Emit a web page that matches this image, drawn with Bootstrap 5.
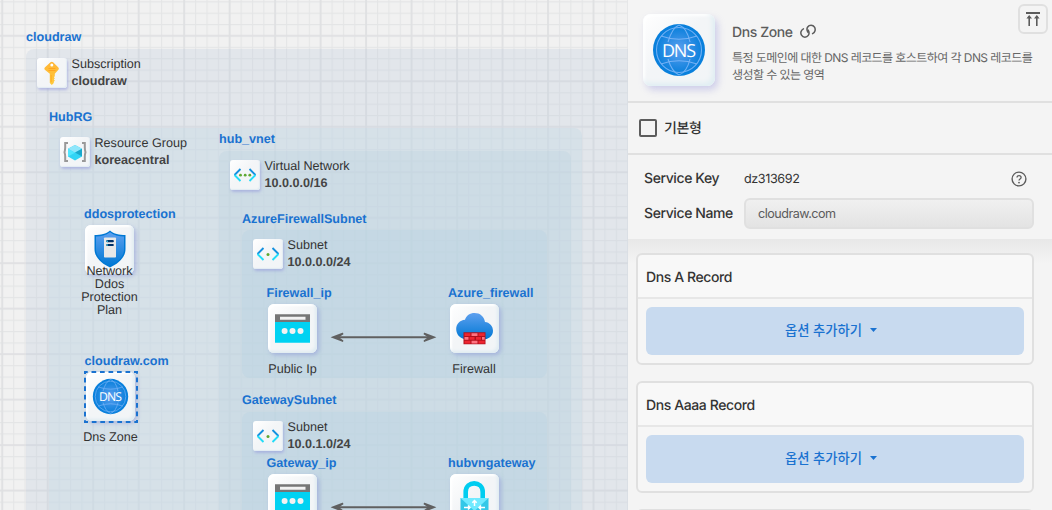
<!DOCTYPE html>
<html lang="ko">
<head>
<meta charset="utf-8">
<meta name="viewport" content="width=device-width, initial-scale=1">
<title>cloudraw</title>
<link href="https://cdn.jsdelivr.net/npm/bootstrap@5.3.0/dist/css/bootstrap.min.css" rel="stylesheet">
<style>
body{font-family:Inter,"Noto Sans CJK KR",sans-serif;font-size:14px;letter-spacing:-.4px;color:#333;background:#f4f4f4;text-rendering:geometricPrecision}
.workspace{height:510px}
.board{background-color:#f1f1f1;font-family:"Liberation Sans",Arial,sans-serif;font-size:12.6px;line-height:17px;letter-spacing:0}
.lines{position:absolute;inset:0;width:100%;height:100%}
.zone,.item{position:absolute}
.zone{border-radius:8px}
.z-sub{left:26px;top:49px;width:700px;height:600px;background:rgba(191,206,221,.3)}
.z-rg{left:49px;top:128px;width:533px;height:500px;background:rgba(199,219,230,.47)}
.z-vnet{left:219px;top:151px;width:352px;height:480px;background:rgba(184,207,221,.3)}
.z-fw,.z-gw{background:rgba(178,208,224,.3)}
.z-fw{left:242px;top:230px;width:305px;height:148px}
.z-gw{left:242px;top:412px;width:305px;height:180px}
.cap{position:absolute;left:0;top:-20px;color:#1a72d0;font-weight:700;white-space:nowrap}
.z-rg>.cap{top:-19px}
.z-fw>.cap{top:-19px}
.z-head{padding:7px 0 0 11px}
.z-head svg,.tile,.tile-lg{background:linear-gradient(135deg,#fff,#f3f5f7 45%,#f2f5f7)}
.z-head svg{width:30px;height:30px;margin:2px 4.5px 0 0;border-radius:3px;box-shadow:1px 2px 3px rgba(150,155,220,.6),inset -1px -1px 1px #e2ecf2;flex:none}
.z-head div{white-space:nowrap}
.z-head b{color:#444}
.tile{width:49px;height:49px;border-radius:6px;display:block;box-shadow:2px 2px 4px rgba(140,150,215,.55),inset -2px -2px 3px #e0ecf2,inset 2px 2px 2px #fff}
.item .cap{left:-1.5px;top:-19px}
.item .sub{position:absolute;left:50%;top:57px;transform:translateX(-50%);white-space:nowrap}
.i-ddos{left:85px;top:225px}
.i-ddos .cap{left:-1px}
.i-dns{left:86px;top:372px}
.i-ip1{left:268px;top:304px}.i-fw{left:449.5px;top:304px}
.i-ip2{left:268px;top:474px}.i-gw{left:449.5px;top:474px}
.i-ddos .sub{top:40px;line-height:13px;text-align:center}
.picked-frame{position:absolute;left:-2px;top:-1px;width:54px;height:52px;z-index:1}
.panel{width:424px;background:#f4f4f4}
.line-b{border-bottom:2px solid #e0e0e0}
.head{height:103px;padding:14px 0 0 15px}
.tile-lg{width:72px;height:72px;border-radius:8px;flex:none;box-shadow:3px 4px 7px rgba(150,150,220,.4),inset -3px -3px 5px #e0eef3,inset 2px 2px 3px #fff}
.head-text{margin-left:17px;padding-top:8px;width:306px;color:#666}
.ttl{font-weight:500;line-height:22px;color:#5c5c5c}
.ttl svg{margin-left:7px}
.desc{font-size:12px;letter-spacing:-.57px;line-height:17px;margin-top:5px}
.up{position:absolute;right:4px;top:4px;width:30px;height:30px;border:2px solid #e0e0e0;border-radius:6px;display:block}
.basic{height:52px;padding-left:11px}
.basic-t{margin-left:7px}
.box{width:18px;height:18px;border:2px solid #5c5c5c;border-radius:2px;background:transparent}
.fields{height:84px;padding:8px 18px 0 16px;font-weight:500}
.fields .lbl{width:100px;line-height:22px}
.key-row{height:31px}
.key-v{font-size:12.6px;font-weight:400;padding-top:3px}
.help{margin-right:7px}
.name-row{margin-top:4px}
.name{height:31px;border:2px solid #e0e0e0;border-radius:6px;background:linear-gradient(#f0f0f0,#e3e3e3);color:#5c5c5c;font-size:12.6px;letter-spacing:-.5px;font-weight:400;padding:0 12px;line-height:26px;box-shadow:none}
.list{padding:14px 18px 0 8px;height:271px;gap:16px;background:linear-gradient(#e8e8e8,#f4f4f4 24px)}
.rec{border:2px solid #e0e0e0;border-radius:6px;height:112px;flex:none;background:rgba(246,246,246,.6)}
.rec-h{height:44px;padding:2px 0 0 8px;font-weight:500;background:rgba(250,250,250,.7);border-bottom:2px solid #e7e7e7;border-radius:5px 5px 0 0}
.add{height:48px;margin:8px;border:0;border-radius:6px;background:#c8daef;color:#1a72d0;font-size:13.3px;font-weight:500;padding:0 8px 0 0}
.add svg{vertical-align:3px}
</style>
</head>
<body class="overflow-hidden">
<svg width="0" height="0" class="position-absolute">
<defs>
<linearGradient id="bl" x1="0" y1="0" x2="0" y2="1"><stop stop-color="#5ea0ef"/><stop offset="1" stop-color="#0078d4"/></linearGradient>
<radialGradient id="gl"><stop stop-color="#5ea0ef"/><stop offset=".9" stop-color="#0a80dc"/></radialGradient>
<linearGradient id="ky" x1="0" y1="0" x2="0" y2="1"><stop stop-color="#ffb535"/><stop offset="1" stop-color="#ffc93c"/></linearGradient>
<symbol id="key" viewBox="0 0 30 30"><path d="M13.500 4.200q1.300-1.100 2.600 0l5.300 5.200q1 1.200 0 2.400l-3.600 3.900v2.500l-1 1 1 1-1 1.200 1 1.200-1 1.100v1.200l-2 2-2-2V15.700l-5-3.900q-1-1.200 0-2.400z" fill="url(#ky)"/><circle cx="14.800" cy="7" r="1.500" fill="#fff"/><path d="M11.500 10.500h7M11.500 12.500h7" stroke="#ffa21f" stroke-width=".9"/><path d="M14.200 17v7" stroke="#ffa21f" stroke-width=".7"/></symbol>
<symbol id="rg" viewBox="0 0 30 30"><path d="M8 6H5.200v4.500q0 2-.7 4.800.7 2.200.7 4.500V24H8M22 6h2.800v4.500q0 2 .7 4.800-.7 2.200-.7 4.500V24H22" fill="none" stroke="#999" stroke-width="2"/><path d="M15 8l7 3.800v7.800L15 23.500l-7-3.900v-7.800z" fill="#32d4f5"/><path d="M15 8l7 3.800-7 4-7-4z" fill="#8fe6fb"/><path d="M15 15.500l7-3.700v7.800z" fill="#1aa8cc"/><path d="M8 11.800l7 4-7 3.800z" fill="#50e6ff"/></symbol>
<symbol id="net" viewBox="0 0 30 30"><path d="M10.500 9L4.500 15M19.500 9l6 6" stroke="#1490df" stroke-width="1.900"/><path d="M4.500 15l6 6M25.500 15l-6 6" stroke="#22dcf8" stroke-width="1.900"/></symbol>
<symbol id="vnet" viewBox="0 0 30 30"><use href="#net"/><g fill="#5ea832"><circle cx="10.500" cy="15.200" r="1.400"/><circle cx="15.200" cy="15.200" r="1.400"/><circle cx="19.800" cy="15.200" r="1.400"/></g></symbol>
<symbol id="snet" viewBox="0 0 30 30"><use href="#net"/><circle cx="15" cy="15.500" r="1.500" fill="#5ea832"/></symbol>
<symbol id="dns" viewBox="0 0 72 72"><circle cx="36" cy="36" r="26" fill="url(#gl)"/><g fill="none" stroke="#83b9f9" stroke-width="1.100" opacity=".85"><circle cx="36" cy="36" r="22.500"/><path d="M18 22q18 6.500 36 0M18 50q18-6.500 36 0M25 28q4-14 11-17 8 3 11 17M25 45q4 13 11 16 8-3 11-16"/></g><text x="36" y="42.500" text-anchor="middle" font-family="Open Sans,Noto Sans,sans-serif" font-size="18" fill="#fff" textLength="34" letter-spacing="0">DNS</text></symbol>
<symbol id="ip" viewBox="0 0 49 49"><path d="M7 10.300h35v8H7z" fill="#767676"/><path d="M12 12.800h25.500v3H12z" fill="#f2f2f2"/><path d="M7 18h35v20.700H7z" fill="#00d2f2"/><g fill="#f2f2f2"><circle cx="16.600" cy="27" r="3"/><circle cx="24.500" cy="27" r="3"/><circle cx="32.500" cy="27" r="3"/></g></symbol>
<symbol id="fire" viewBox="0 0 49 49"><path d="M15 35.200h20c4.600-.6 8-4 8-8.500 0-5-3.600-8.200-8-8.700-.8-5.600-5-9-10.500-9-4.600 0-8.200 2.600-9.500 6.800-5.200.4-8.800 4.300-8.800 9.300 0 5.600 3.900 9.500 8.800 10.100z" fill="url(#bl)"/><path d="M13.500 28.300h22v12h-22z" fill="#b0101c"/><g fill="#ee2530"><path d="M14.500 29.300h6v2.800h-6zM28.500 29.300h6.200v2.800h-6.200zM19.500 33h5v2.800h-5zM14.500 36.800h6v2.700h-6zM28.500 36.800h6.200v2.700h-6.200zM26 33h5v2.800h-5z"/></g><g fill="#ff7381"><path d="M21.500 29.300h6v2.800h-6zM14.500 33h4v2.800h-4zM32 33h2.700v2.800H32zM21.500 36.800h6v2.700h-6z"/></g></symbol>
<symbol id="shield" viewBox="0 0 49 49"><path d="M25 5.500c4 3.700 9 4.300 15.500 4.500v14c0 9-8 15-15.500 18.500C17.500 39 9.500 33 9.500 24V10C16 9.800 21 9.200 25 5.500z" fill="#0078d4"/><path d="M25 7.200c4 3.200 8.500 4.100 14 4.300V24c0 8-7 13.500-14 17-7-3.500-14-9-14-17V11.500c5.500-.2 10-1.100 14-4.300z" fill="url(#bl)"/><rect x="19" y="12.500" width="12" height="20" rx=".8" fill="#e8e8e8"/><path d="M22.300 16.200h5.500M22.300 20h5.500" stroke="#003067" stroke-width="2.200" stroke-linecap="round"/><circle cx="22.300" cy="16.200" r=".8" fill="#32d4f5"/><circle cx="22.300" cy="20" r=".8" fill="#32d4f5"/></symbol>
<symbol id="lock" viewBox="0 0 49 49"><path d="M15.700 25v-7c0-11.500 17-11.500 17 0v7" fill="none" stroke="#00cdf0" stroke-width="4.600"/><path d="M10.500 24h28v18h-28z" fill="#32c8e8"/><path d="M10.500 24h28l-14 13z" fill="#70eaff"/><path d="M24.500 32v-5m-2.200 1.700l2.200-2.200 2.200 2.200M14 33.500h6m-2-2l2 2-2 2M35 33.500h-6m2-2l-2 2 2 2" stroke="#fff" stroke-width="1.500" fill="none"/></symbol>
<pattern id="minor" x="1.800" y="1.300" width="11.370" height="11.370" patternUnits="userSpaceOnUse"><path d="M.6 0v11.370M0 .6h11.370" stroke="#e4e5e6" stroke-width="1.100"/></pattern>
<pattern id="major" x="46.700" y="34.700" width="45.480" height="45.480" patternUnits="userSpaceOnUse"><path d="M1 0v45.480M0 1h45.480" stroke="#dfe0e2" stroke-width="1.600"/></pattern>
<symbol id="arrow" viewBox="0 0 106 10"><path d="M5 5h96" stroke="#606060" stroke-width="2"/><path d="M0 5L12.500.3 12.900 1.900 8.500 5l4.400 3.100-.4 1.600zM106 5L93.500.3l-.4 1.600L97.500 5l-4.400 3.100.4 1.600z" fill="#606060"/></symbol>
</defs></svg>

<div class="workspace d-flex">
<main class="board flex-grow-1 position-relative overflow-hidden">
<svg class="lines"><rect width="100%" height="100%" fill="url(#minor)"/><rect width="100%" height="100%" fill="url(#major)"/></svg>
<section class="zone z-sub"><div class="cap">cloudraw</div><div class="z-head d-flex"><svg><use href="#key"/></svg><div>Subscription<br><b>cloudraw</b></div></div></section>
<section class="zone z-rg"><div class="cap">HubRG</div><div class="z-head d-flex"><svg><use href="#rg"/></svg><div>Resource Group<br><b>koreacentral</b></div></div></section>
<section class="zone z-vnet"><div class="cap">hub_vnet</div><div class="z-head d-flex"><svg><use href="#vnet"/></svg><div>Virtual Network<br><b>10.0.0.0/16</b></div></div></section>
<section class="zone z-fw"><div class="cap">AzureFirewallSubnet</div><div class="z-head d-flex"><svg><use href="#snet"/></svg><div>Subnet<br><b>10.0.0.0/24</b></div></div></section>
<section class="zone z-gw"><div class="cap">GatewaySubnet</div><div class="z-head d-flex"><svg><use href="#snet"/></svg><div>Subnet<br><b>10.0.1.0/24</b></div></div></section>
<svg class="lines"><use href="#arrow" x="330.500" y="332.300" width="106" height="10"/><use href="#arrow" x="330.500" y="502.300" width="106" height="10"/></svg>
<div class="item i-ddos"><div class="cap">ddosprotection</div><svg class="tile"><use href="#shield"/></svg><div class="sub">Network<br>Ddos<br>Protection<br>Plan</div></div>
<div class="item i-dns"><div class="cap">cloudraw.com</div><svg class="tile" viewBox="0 0 49 49"><use href="#dns" x="0" y="0" width="49" height="49"/></svg><svg class="picked-frame"><rect x="1" y="1" width="52" height="50" fill="none" stroke="#1a72d0" stroke-width="2" stroke-dasharray="4.700 3.800" stroke-dashoffset="2"/></svg><div class="sub">Dns Zone</div></div>
<div class="item i-ip1"><div class="cap">Firewall_ip</div><svg class="tile"><use href="#ip"/></svg><div class="sub">Public Ip</div></div>
<div class="item i-fw"><div class="cap">Azure_firewall</div><svg class="tile"><use href="#fire"/></svg><div class="sub">Firewall</div></div>
<div class="item i-ip2"><div class="cap">Gateway_ip</div><svg class="tile"><use href="#ip"/></svg></div>
<div class="item i-gw"><div class="cap">hubvngateway</div><svg class="tile"><use href="#lock"/></svg></div>
</main>

<aside class="panel flex-shrink-0 overflow-hidden">
<header class="head line-b d-flex position-relative">
<svg class="tile-lg"><use href="#dns"/></svg>
<div class="head-text"><div class="ttl d-flex align-items-center">Dns Zone
<svg class="mb-1" width="16" height="17" viewBox="0 0 16 17" fill="none" stroke="#5c5c5c" stroke-width="1.500" stroke-linecap="round"><path d="M3.400 5.800C.8 7.200.2 10 1.500 12.200c1.600 2.700 5.200 2.500 6.800.2 1.200-1.800.9-3.600-.3-5.400"/><path d="M12.600 10.600c2.600-1.400 3.200-4.200 1.900-6.400-1.600-2.700-5.200-2.500-6.800-.2-1.200 1.800-.9 3.600.3 5.400"/></svg></div>
<div class="desc">특정 도메인에 대한 DNS 레코드를 호스트하여 각 DNS 레코드를 생성할 수 있는 영역</div></div>
<svg class="up" viewBox="0 0 26 26"><path d="M6 7h14" stroke="#5c5c5c" stroke-width="1.800"/><path d="M9.200 20V10.500M16.800 20V10.500" stroke="#5c5c5c" stroke-width="1.600"/><path d="M9.200 9l2.800 3.500H6.400zM16.800 9l2.800 3.500H14z" fill="#5c5c5c"/></svg>
</header>
<div class="basic line-b d-flex align-items-center"><span class="box"></span><span class="fw-medium basic-t">기본형</span></div>
<section class="fields">
<div class="key-row d-flex align-items-center"><span class="lbl">Service Key</span><span class="key-v flex-grow-1">dz313692</span>
<svg class="help" width="16" height="16" viewBox="0 0 16 16"><circle cx="8" cy="8" r="6.900" fill="none" stroke="#5c5c5c" stroke-width="1.400"/><path d="M6 6.600c0-2.700 4.100-2.600 4.100-.1 0 1.500-2.100 1.500-2.100 3.100" fill="none" stroke="#5c5c5c" stroke-width="1.300"/><circle cx="8" cy="11.600" r=".9" fill="#5c5c5c"/></svg></div>
<div class="name-row d-flex align-items-center"><label class="lbl" for="nm">Service Name</label><input id="nm" class="name form-control flex-fill w-auto" value="cloudraw.com"></div>
</section>
<section class="list d-flex flex-column">
<div class="rec"><div class="rec-h d-flex align-items-center">Dns A Record</div><div class="d-grid"><button class="btn add">옵션 추가하기<svg class="ms-2" width="7" height="4"><path d="M0 0h7L3.500 4z" fill="currentColor"/></svg></button></div></div>
<div class="rec"><div class="rec-h d-flex align-items-center">Dns Aaaa Record</div><div class="d-grid"><button class="btn add">옵션 추가하기<svg class="ms-2" width="7" height="4"><path d="M0 0h7L3.500 4z" fill="currentColor"/></svg></button></div></div>
<div class="rec"></div>
</section>
</aside>
</div>
<script src="https://cdn.jsdelivr.net/npm/bootstrap@5.3.0/dist/js/bootstrap.bundle.min.js"></script>
</body>
</html>
